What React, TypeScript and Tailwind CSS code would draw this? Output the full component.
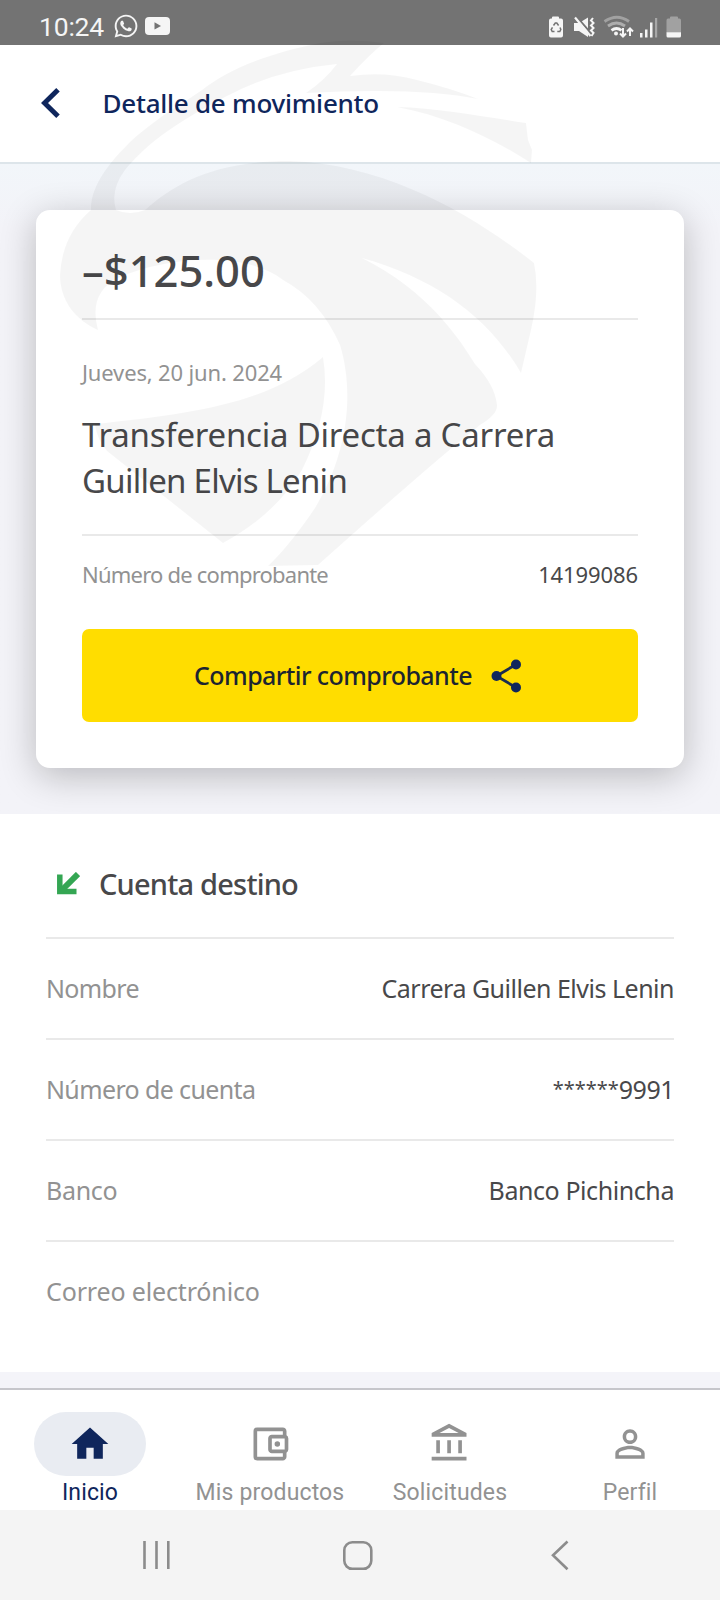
import React from "react";
import type { ReactNode } from "react";
import { FaWhatsapp } from "react-icons/fa";
import {
  MdHome,
  MdOutlineAccountBalance,
  MdOutlineAccountBalanceWallet,
  MdPersonOutline,
} from "react-icons/md";
import type { IconType } from "react-icons";
import clsx from "clsx";

interface DetailRowProps {
  label: string;
  value?: ReactNode;
  labelClass?: string;
  valueClass?: string;
  last?: boolean;
}

interface NavItemProps {
  icon: IconType;
  label: string;
  active?: boolean;
}

const StatusBar = () => (
  <div className="flex h-[45px] items-center justify-between bg-[#737373] pt-[7px] pr-[38px] pl-[39px] text-[#f5f5f5]">
    <div className="flex items-center">
      <span className="w-[74px] pt-px font-[Roboto,sans-serif] text-[26.5px] leading-[38px] font-normal tracking-[-0.2px]">
        10:24
      </span>
      <FaWhatsapp className="size-[26px]" />
      <svg className="ml-[6px] h-[18px] w-[25px]" viewBox="0 0 25 18">
        <rect width="25" height="18" rx="4" fill="currentColor" />
        <path d="M9.5 5.2v7.4l6.5-3.7z" fill="#737373" />
      </svg>
    </div>
    <svg className="h-[26px] w-[134px]" viewBox="548 12 134 26" fill="currentColor">
      {/* battery saver */}
      <path d="M552 17.500v-1q0-1 1-1h5q1 0 1 1v1h2q2 0 2 2v15q0 2-2 2h-10q-2 0-2-2v-15q0-2 2-2z" />
      <g fill="none" stroke="#737373" strokeWidth="1.5">
        <path d="M553.500 24.500l1.800-2.500h1.500l1.800 2.500M560 26.500l.8 2-1 2h-2.500M554.500 30.500h-2.300l-1-2 1.300-2.200" />
      </g>
      {/* muted */}
      <path d="M574 22h5l9-5.500v19.500l-9-6h-5z" />
      <path d="M575.500 14.500l16 18.500" stroke="#737373" strokeWidth="2" />
      <path d="M575 16.500l15.500 18.500" stroke="currentColor" strokeWidth="2.200" />
      <path
        d="M593 17l-2 2.500 2.500 2.500-2.500 2.500 2.500 2.500-2.500 2.500 2.500 2.500-2 3"
        fill="none"
        stroke="currentColor"
        strokeWidth="2"
      />
      {/* wifi */}
      <g fill="none" stroke="currentColor" strokeWidth="2.800">
        <path d="M604.500 20.500q12.500-8.500 24.500 0" opacity=".35" />
        <path d="M608 25q8.500-6 17 0" opacity=".45" />
        <path d="M611.500 29.300q5-3.600 10 0" />
      </g>
      <circle cx="616" cy="32.500" r="2" />
      <path
        d="M623 27v8.500m-3-3l3 3 3-3M630 35v-7.500m-3 3l3-3 3 3"
        fill="none"
        stroke="currentColor"
        strokeWidth="2"
      />
      {/* signal */}
      <path d="M640 32h2.500v4.500H640zM645 28.500h2.500v8H645zM650 21.500h2.500v15H650z" />
      <path d="M655 17h2.200v19.500H655z" opacity=".4" />
      {/* battery */}
      <path
        d="M670 17.500v-1q0-1 1-1h6q1 0 1 1v1h1.500q1.500 0 1.500 2v12h-14.500v-12q0-2 1.500-2z"
        opacity=".35"
      />
      <path d="M666.500 31.300H681V35q0 1.500-1.500 1.500H668q-1.500 0-1.500-1.500z" />
    </svg>
  </div>
);

const AppHeader = () => (
  <header className="flex h-[119px] items-center border-b-2 border-[#dde5ea] bg-white pb-[2px] pl-[41px]">
    <svg className="mt-px h-[30px] w-[19px]" viewBox="0 0 19 30">
      <path d="M17 1.800L3.500 15 17 28.200" fill="none" stroke="#0f265c" strokeWidth="5" />
    </svg>
    <h1 className="ml-[42.5px] text-[26px] leading-[36px] font-medium tracking-[-0.25px] whitespace-nowrap text-[#0f265c]">
      Detalle de movimiento
    </h1>
  </header>
);

const DetailRow = ({ label, value, labelClass, valueClass, last }: DetailRowProps) => (
  <div
    className={clsx(
      "flex h-[101px] items-center justify-between border-b-2 text-[25px] whitespace-nowrap",
      last ? "border-transparent" : "border-[#e9e9e9]"
    )}
  >
    <span className={clsx("text-[#929292]", labelClass)}>{label}</span>
    <span className={clsx("text-[#48484a]", valueClass)}>{value}</span>
  </div>
);

const NavItem = ({ icon: Icon, label, active }: NavItemProps) => (
  <div
    className={clsx(
      "flex flex-1 flex-col items-center",
      active ? "text-[#0f265c]" : "text-[#929292]"
    )}
  >
    <div
      className={clsx(
        "flex h-[64px] w-[112px] items-center justify-center rounded-full",
        active && "bg-[#e9ecf2]"
      )}
    >
      <Icon className="size-[44px]" />
    </div>
    <span className="font-[Roboto,sans-serif] text-[23px] leading-[34px] tracking-[0.15px] whitespace-nowrap">
      {label}
    </span>
  </div>
);

// Faint bank crest that is stamped over the top of the screen
const Watermark = () => (
  <svg
    className="pointer-events-none absolute top-0 left-0 h-[600px] w-[600px]"
    viewBox="0 0 600 600"
    fill="#000"
    fillOpacity=".04"
  >
    <path d="M91 210C90 185 112 160 130 142C160 115 185 102 202 90C230 68 270 53 320 43Q350 38 384 43Q370 54 350 76Q385 71 417 80Q450 88 478 99Q420 87 306 93Q325 80 337 64Q275 70 225 97C180 121 150 140 125 170Q110 190 116 210Q130 216 145 210C175 183 215 161 290 161C390 164 480 220 534 263Q540 290 531 330L521 373C490 320 440 280 362 258C430 292 460 340 475 364Q495 385 497 405Q498 414 480 425C430 465 380 510 318 565L268 566Q290 545 315 508C347 455 355 395 340 345Q320 300 283 280C245 250 165 257 118 278Q88 293 98 330C75 320 60 300 60 275Q62 235 91 210Z" />
    <path d="M397 107C440 108 485 117 526 123L528 140 532 150 531 163C495 140 450 117 397 107Z" />
    <path d="M323 357C270 402 200 413 95 424Q97 440 107 451L223 543Q275 515 302 470Q332 410 323 357Z" />
  </svg>
);

const App = () => {
  return (
    <div className="relative flex h-[1600px] w-[720px] flex-col overflow-hidden bg-white font-['Noto_Sans',sans-serif]">
      <StatusBar />
      <AppHeader />

      <main className="h-[1224px] bg-[#f4f4f9]">
        <section className="h-[650px] overflow-hidden bg-gradient-to-b from-[#f2f6fa] via-[#f3f3f8] via-10% to-[#f3f3f8] px-[36px] pt-[46px]">
          <div className="h-[558px] rounded-[14px] bg-white px-[46px] pt-[12px] shadow-[0_8px_36px_rgba(0,0,0,0.24)]">
            <div className="h-[98px] border-b-2 border-[#e9e9e9] text-[43.5px] leading-[96px] font-medium tracking-[0px] text-[#48484a]">
              –$125.00
            </div>
            <p className="mt-[36px] text-[22px] leading-[32px] tracking-[-0.15px] text-[#929292]">
              Jueves, 20 jun. 2024
            </p>
            <h2 className="mt-[24px] text-[33px] leading-[46px] whitespace-nowrap text-[#48484a]">
              <span className="tracking-[-0.22px]">Transferencia Directa a Carrera</span>
              <br />
              <span className="tracking-[-0.75px]">Guillen Elvis Lenin</span>
            </h2>
            <div className="mt-[30px] flex justify-between border-t-2 border-[#e9e9e9] pt-[22px] text-[22px] leading-[32px]">
              <span className="tracking-[-0.78px] text-[#929292]">Número de comprobante</span>
              <span className="tracking-[-0.1px] text-[#48484a]">14199086</span>
            </div>
            <button className="mt-[39px] flex h-[93px] w-full items-center justify-center rounded-[7px] bg-[#ffdd00] pr-[4px] text-[25px] font-medium tracking-[-0.58px] text-[#1c2430]">
              Compartir comprobante
              <svg className="ml-[19px] h-[34px] w-[31px]" viewBox="0 0 31 34">
                <path d="M25 5.500L5.500 17 25 28.500" fill="none" stroke="#1a2c50" strokeWidth="2.800" />
                <g fill="#0f265c">
                  <circle cx="25" cy="5.500" r="5" />
                  <circle cx="5.500" cy="17" r="5" />
                  <circle cx="25" cy="28.500" r="5" />
                </g>
              </svg>
            </button>
          </div>
        </section>

        <section className="h-[558px] bg-white px-[46px] pt-[16px]">
          <div className="flex h-[109px] items-center border-b-2 border-[#e9e9e9]">
            <svg className="ml-[11px] size-[23px]" viewBox="0 0 23 23" fill="none" stroke="#34a653">
              <path d="M2.800 2.500V19.500H19.500" strokeWidth="5.500" />
              <path d="M3.500 19.500L21 2" strokeWidth="6" />
            </svg>
            <h3 className="ml-[19px] text-[29px] font-medium tracking-[-0.8px] text-[#48484a]">
              Cuenta destino
            </h3>
          </div>
          <DetailRow
            label="Nombre"
            value="Carrera Guillen Elvis Lenin"
            labelClass="tracking-[-0.65px]"
            valueClass="tracking-[-0.5px]"
          />
          <DetailRow
            label="Número de cuenta"
            value={
              <>
                <span className="relative -top-[3px] text-[20px] leading-none tracking-[0px]">
                  ******
                </span>
                9991
              </>
            }
            labelClass="tracking-[-0.63px]"
            valueClass="tracking-[-0.5px]"
          />
          <DetailRow
            label="Banco"
            value="Banco Pichincha"
            labelClass="tracking-[-0.3px]"
            valueClass="tracking-[-0.42px]"
          />
          <DetailRow label="Correo electrónico" labelClass="tracking-[-0.15px]" last />
        </section>
      </main>

      <nav className="flex h-[122px] border-t-2 border-[#c6c6cb] bg-white pt-[22px]">
        <NavItem icon={MdHome} label="Inicio" active />
        <NavItem icon={MdOutlineAccountBalanceWallet} label="Mis productos" />
        <NavItem icon={MdOutlineAccountBalance} label="Solicitudes" />
        <NavItem icon={MdPersonOutline} label="Perfil" />
      </nav>

      <div className="flex h-[90px] items-center bg-[#f4f4f4] pl-[142px]">
        <svg
          className="h-[32px] w-[428px]"
          viewBox="142 1539 428 32"
          fill="none"
          stroke="#8c8c8c"
          strokeWidth="2.600"
        >
          <path d="M144.500 1541v28M156.500 1541v28M168.300 1541v28" />
          <rect x="344.300" y="1542.300" width="27" height="26.500" rx="8" />
          <path d="M567.500 1541.500L553 1555.300l14.500 14" />
        </svg>
      </div>

      <Watermark />
    </div>
  );
};

export default App;
